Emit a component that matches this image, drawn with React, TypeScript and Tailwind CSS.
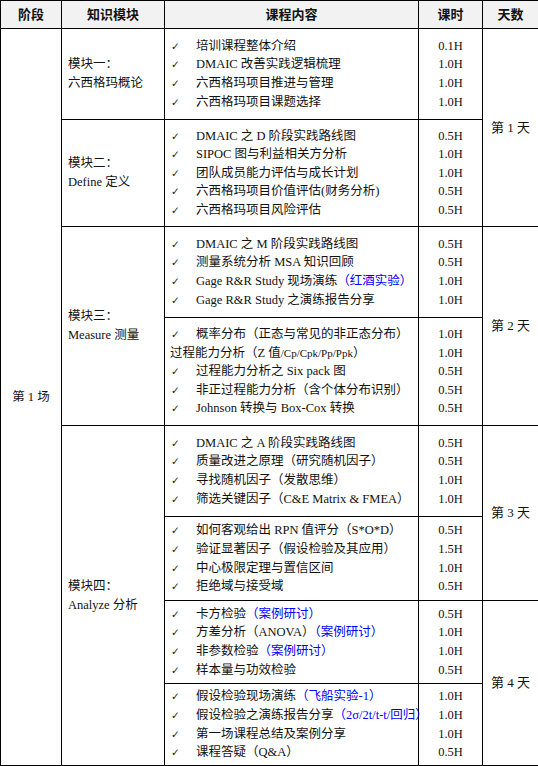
import type { ReactNode } from "react";

type Item = { text: ReactNode; hours: string; check?: boolean };
type Block = { h: string; items: Item[]; module?: { span: number; lines: ReactNode[] }; day?: string };

const Blue = ({ children }: { children: ReactNode }) => <span className="text-[#0000ff]">{children}</span>;

const blocks: Block[] = [
  {
    h: "h-[91px]",
    module: { span: 1, lines: ["模块一：", "六西格玛概论"] },
    day: "第 1 天",
    items: [
      { text: "培训课程整体介绍", hours: "0.1H" },
      { text: "DMAIC 改善实践逻辑梳理", hours: "1.0H" },
      { text: "六西格玛项目推进与管理", hours: "1.0H" },
      { text: "六西格玛项目课题选择", hours: "1.0H" },
    ],
  },
  {
    h: "h-[107px]",
    module: { span: 1, lines: ["模块二：", "Define 定义"] },
    items: [
      { text: "DMAIC 之 D 阶段实践路线图", hours: "0.5H" },
      { text: "SIPOC 图与利益相关方分析", hours: "1.0H" },
      { text: "团队成员能力评估与成长计划", hours: "1.0H" },
      { text: "六西格玛项目价值评估(财务分析)", hours: "0.5H" },
      { text: "六西格玛项目风险评估", hours: "0.5H" },
    ],
  },
  {
    h: "h-[91px]",
    module: { span: 2, lines: ["模块三：", "Measure 测量"] },
    day: "第 2 天",
    items: [
      { text: "DMAIC 之 M 阶段实践路线图", hours: "0.5H" },
      { text: "测量系统分析 MSA 知识回顾", hours: "0.5H" },
      { text: <>Gage R&amp;R Study 现场演练<Blue>（红酒实验）</Blue></>, hours: "1.0H" },
      { text: "Gage R&R Study 之演练报告分享", hours: "1.0H" },
    ],
  },
  {
    h: "h-[108px]",
    items: [
      { text: "概率分布（正态与常见的非正态分布）", hours: "1.0H" },
      {
        text: <>过程能力分析（Z 值<span className="text-[11px]">/Cp/Cpk/Pp/Ppk</span>）</>,
        hours: "1.0H",
        check: false,
      },
      { text: "过程能力分析之 Six pack 图", hours: "0.5H" },
      { text: "非正过程能力分析（含个体分布识别）", hours: "0.5H" },
      { text: "Johnson 转换与 Box-Cox 转换", hours: "0.5H" },
    ],
  },
  {
    h: "h-[91px]",
    module: { span: 4, lines: ["模块四：", "Analyze 分析"] },
    day: "第 3 天",
    items: [
      { text: "DMAIC 之 A 阶段实践路线图", hours: "0.5H" },
      { text: "质量改进之原理（研究随机因子）", hours: "0.5H" },
      { text: "寻找随机因子（发散思维）", hours: "1.0H" },
      { text: "筛选关键因子（C&E Matrix & FMEA）", hours: "1.0H" },
    ],
  },
  {
    h: "h-[84px]",
    items: [
      { text: "如何客观给出 RPN 值评分（S*O*D）", hours: "0.5H" },
      { text: "验证显著因子（假设检验及其应用）", hours: "1.5H" },
      { text: "中心极限定理与置信区间", hours: "1.0H" },
      { text: "拒绝域与接受域", hours: "0.5H" },
    ],
  },
  {
    h: "h-[83px]",
    day: "第 4 天",
    items: [
      { text: <>卡方检验<Blue>（案例研讨）</Blue></>, hours: "0.5H" },
      { text: <>方差分析（ANOVA）<Blue>（案例研讨）</Blue></>, hours: "1.0H" },
      { text: <>非参数检验<Blue>（案例研讨）</Blue></>, hours: "1.0H" },
      { text: "样本量与功效检验", hours: "0.5H" },
    ],
  },
  {
    h: "h-[82px]",
    items: [
      { text: <>假设检验现场演练<Blue>（飞船实验-1）</Blue></>, hours: "1.0H" },
      { text: <>假设检验之演练报告分享<Blue>（2σ/2t/t-t/回归）</Blue></>, hours: "1.0H" },
      { text: "第一场课程总结及案例分享", hours: "1.0H" },
      { text: "课程答疑（Q&A）", hours: "0.5H" },
    ],
  },
];

const cell = "border border-black align-middle";

export default function App() {
  return (
    <div className="w-[538px] bg-white font-['Liberation_Serif','Noto_Sans_CJK_SC',serif] text-[12.5px] text-[#111]">
      <table className="w-[538px] table-fixed border-collapse">
        <colgroup>
          <col className="w-[61px]" />
          <col className="w-[103px]" />
          <col className="w-[254px]" />
          <col className="w-[64px]" />
          <col className="w-[56px]" />
        </colgroup>
        <thead>
          <tr className="h-[28px] bg-[#f2f2f2] text-[13px] font-bold">
            <th className={cell}>阶段</th>
            <th className={cell}>知识模块</th>
            <th className={cell}>课程内容</th>
            <th className={cell}>课时</th>
            <th className={cell}>天数</th>
          </tr>
        </thead>
        <tbody>
          {blocks.map((b, i) => (
            <tr key={i} className={b.h}>
              {i === 0 && (
                <td rowSpan={8} className={`${cell} text-center`}>
                  第 1 场
                </td>
              )}
              {b.module && (
                <td rowSpan={b.module.span} className={`${cell} px-[6px] leading-[18.6px]`}>
                  {b.module.lines.map((l, j) => (
                    <div key={j}>{l}</div>
                  ))}
                </td>
              )}
              <td className={`${cell} px-[5px] leading-[18.6px]`}>
                {b.items.map((it, j) => (
                  <div key={j} className="flex whitespace-nowrap">
                    {it.check !== false && (
                      <span className="w-[26px] shrink-0 pl-[1px] font-['DejaVu_Sans',sans-serif] text-[10.5px] text-[#222]">
                        ✓
                      </span>
                    )}
                    <span>{it.text}</span>
                  </div>
                ))}
              </td>
              <td className={`${cell} text-center leading-[18.6px]`}>
                {b.items.map((it, j) => (
                  <div key={j}>{it.hours}</div>
                ))}
              </td>
              {b.day && (
                <td rowSpan={2} className={`${cell} text-center text-[13px]`}>
                  {b.day}
                </td>
              )}
            </tr>
          ))}
        </tbody>
      </table>
    </div>
  );
}
